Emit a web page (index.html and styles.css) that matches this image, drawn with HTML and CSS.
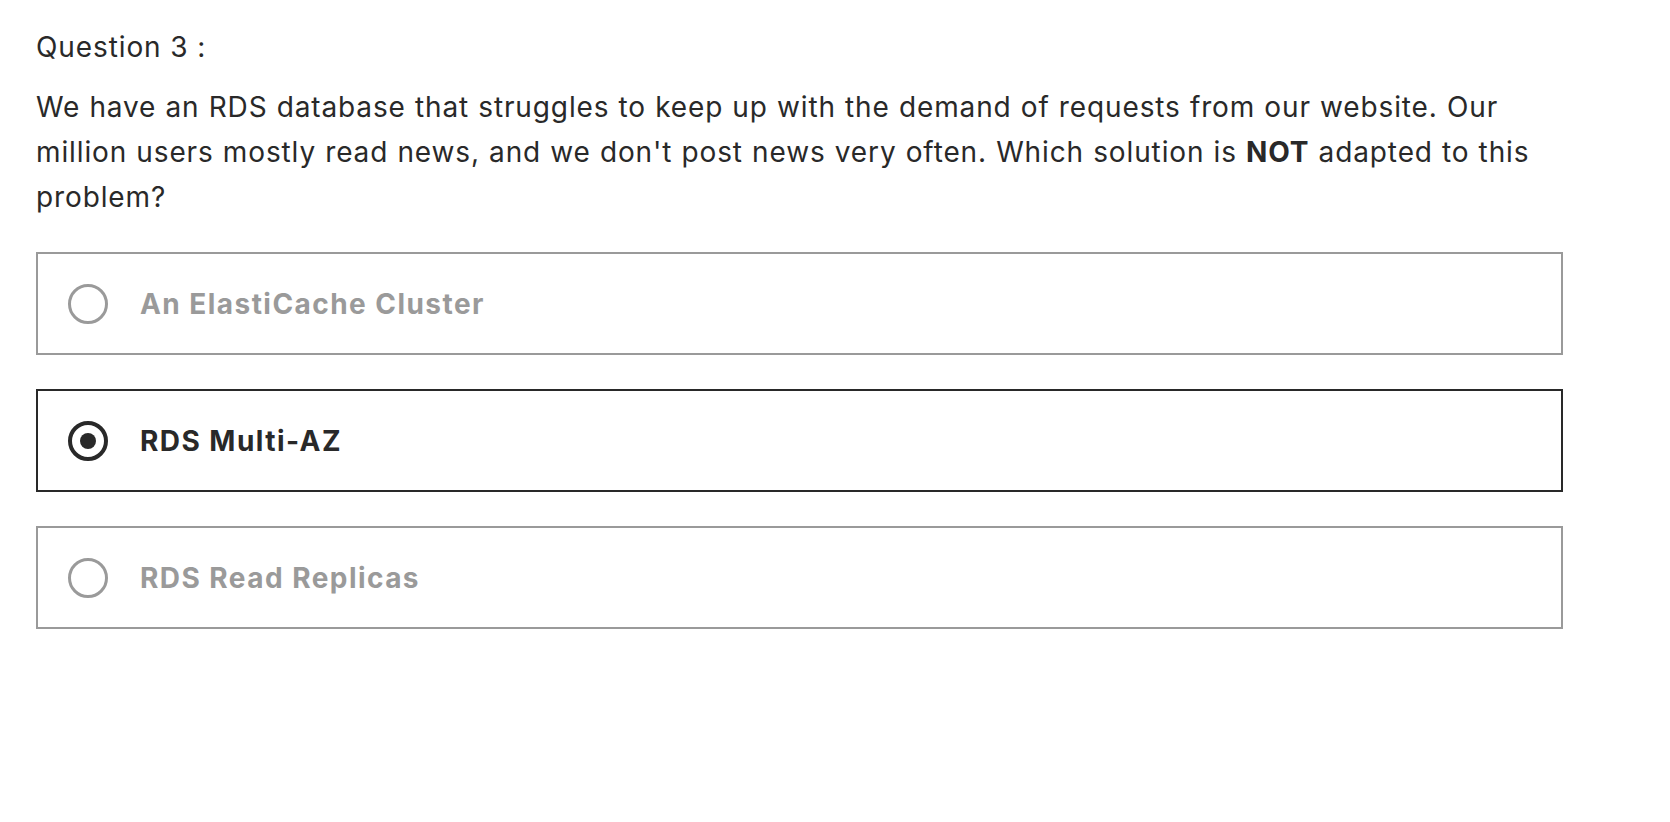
FILE: index.html
```html
<!DOCTYPE html>
<html lang="en">
<head>
<meta charset="utf-8">
<title>Question 3</title>
<link rel="stylesheet" href="styles.css">
</head>
<body>
<main class="quiz">
  <p class="q-title">Question 3 :</p>
  <p class="q-text">We have an RDS database that struggles to keep up with the demand of requests from our website. Our million users mostly read news, and we don't post news very often. Which solution is <strong>NOT</strong> adapted to this problem?</p>
  <div class="options">
    <label class="option">
      <span class="radio"></span>
      <span class="label">An ElastiCache Cluster</span>
    </label>
    <label class="option selected">
      <span class="radio"></span>
      <span class="label">RDS Multi-AZ</span>
    </label>
    <label class="option">
      <span class="radio"></span>
      <span class="label">RDS Read Replicas</span>
    </label>
  </div>
</main>
</body>
</html>
```
FILE: styles.css
```css
html, body {
  margin: 0;
  padding: 0;
  background: #ffffff;
}
body {
  font-family: Inter, "Liberation Sans", Arial, sans-serif;
  color: #292929;
}
.quiz {
  width: 1527px;
  padding: 25px 0 0 36px;
}
.q-title {
  margin: 0;
  font-size: 28px;
  line-height: 45px;
  letter-spacing: 0.9px;
}
.q-text {
  margin: 15px 0 0 0;
  font-size: 28px;
  line-height: 45px;
  letter-spacing: 0.88px;
  word-spacing: 0.4px;
}
.q-text strong {
  font-weight: 700;
  letter-spacing: 0.9px;
}
.options {
  margin-top: 32px;
  display: flex;
  flex-direction: column;
  gap: 34px;
}
.option {
  box-sizing: border-box;
  height: 103px;
  border: 2px solid #9a9a9a;
  display: flex;
  align-items: center;
  padding-left: 30px;
  gap: 32px;
  color: #9a9a9a;
}
.option.selected {
  border-color: #292929;
  color: #292929;
}
.radio {
  box-sizing: border-box;
  width: 40px;
  height: 40px;
  border: 3px solid #9a9a9a;
  border-radius: 50%;
  display: flex;
  align-items: center;
  justify-content: center;
  flex: none;
}
.option.selected .radio {
  border: 4px solid #292929;
}
.option.selected .radio::after {
  content: "";
  width: 16px;
  height: 16px;
  border-radius: 50%;
  background: #292929;
}
.label {
  font-size: 28px;
  font-weight: 700;
  line-height: 40px;
  letter-spacing: 1.45px;
}
```
